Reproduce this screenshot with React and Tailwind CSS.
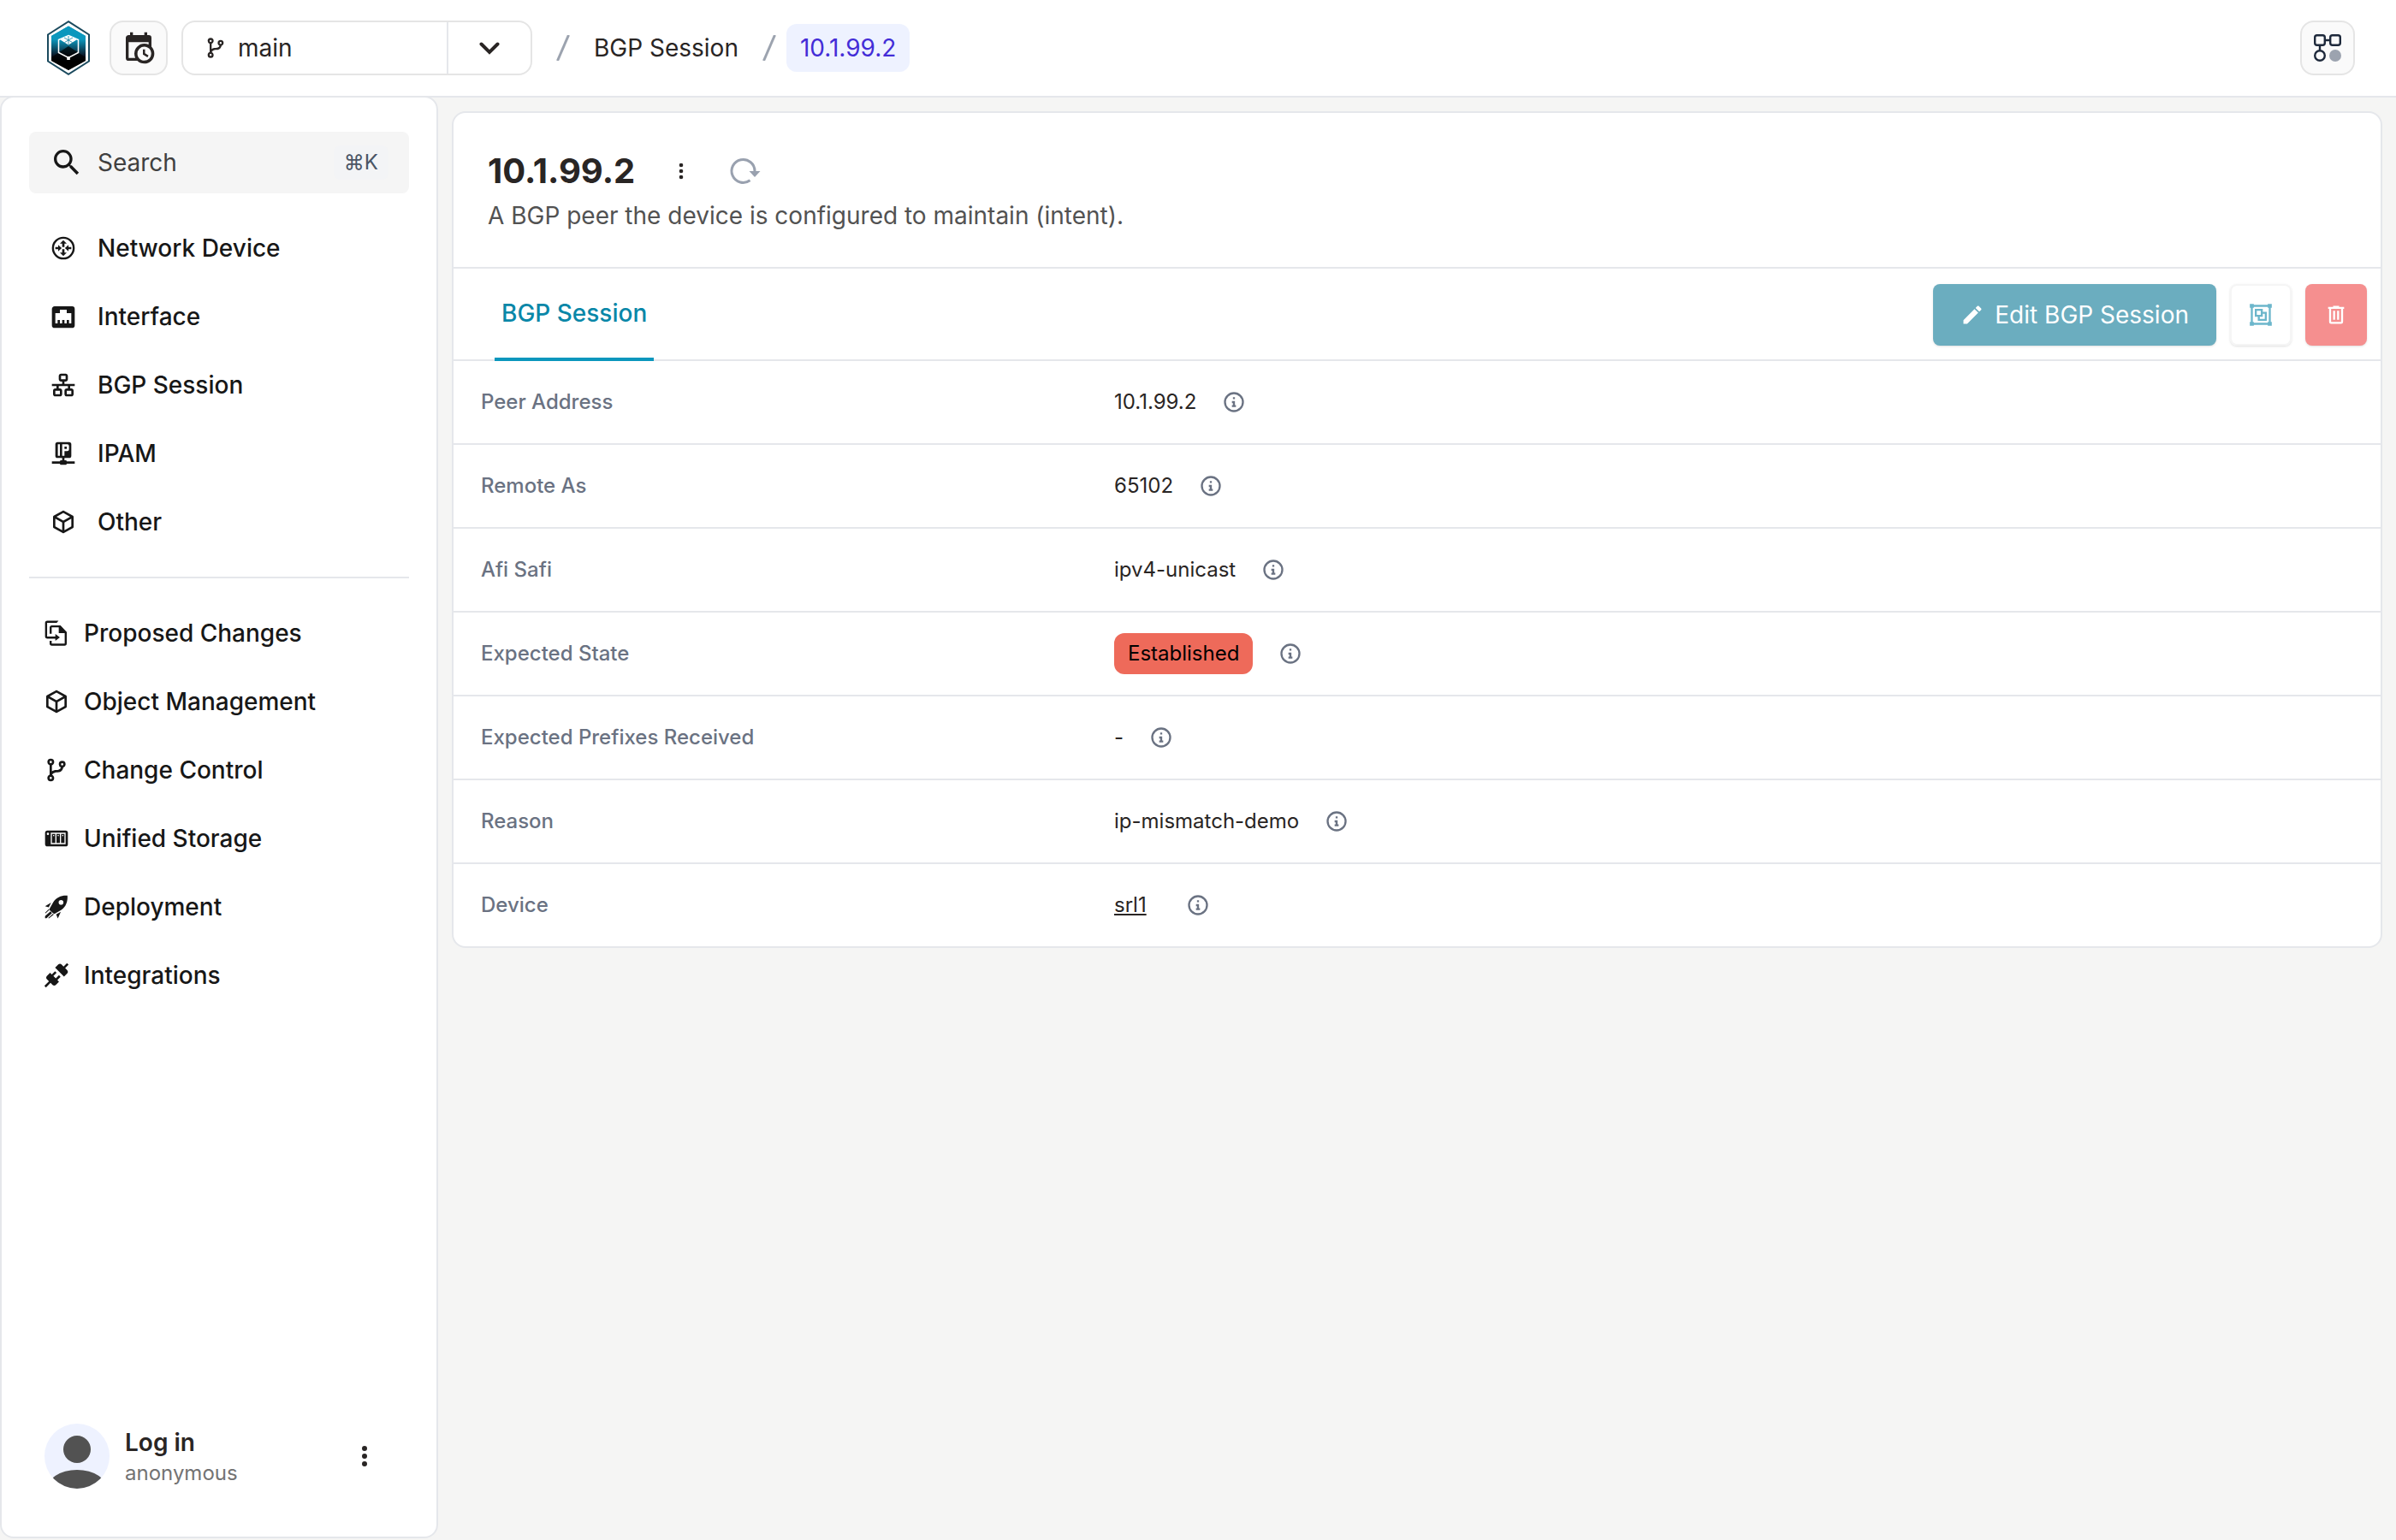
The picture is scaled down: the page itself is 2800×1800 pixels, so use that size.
const icons = {
  calendarClock:
    'M15 13h1.5v2.82l2.44 1.41l-.75 1.3L15 16.69zm4-5H5v11h4.67c-.43-.91-.67-1.93-.67-3a7 7 0 0 1 7-7c1.07 0 2.09.24 3 .67zM5 21a2 2 0 0 1-2-2V5c0-1.11.89-2 2-2h1V1h2v2h8V1h2v2h1a2 2 0 0 1 2 2v6.1c1.24 1.26 2 2.99 2 4.9a7 7 0 0 1-7 7c-1.91 0-3.64-.76-4.9-2zm11-9.85A4.85 4.85 0 0 0 11.15 16c0 2.68 2.17 4.85 4.85 4.85A4.85 4.85 0 0 0 20.85 16c0-2.68-2.17-4.85-4.85-4.85',
  branch:
    'M13 14c-3.36 0-4.46 1.35-4.82 2.24C9.25 16.7 10 17.76 10 19a3 3 0 0 1-3 3a3 3 0 0 1-3-3c0-1.31.83-2.42 2-2.83V7.83A2.99 2.99 0 0 1 4 5a3 3 0 0 1 3-3a3 3 0 0 1 3 3c0 1.31-.83 2.42-2 2.83v5.29c.88-.65 2.16-1.12 4-1.12c2.67 0 3.56-1.34 3.85-2.23A3.006 3.006 0 0 1 14 7a3 3 0 0 1 3-3a3 3 0 0 1 3 3c0 1.34-.88 2.5-2.09 2.86C17.65 11.29 16.68 14 13 14m-6 4a1 1 0 0 0-1 1a1 1 0 0 0 1 1a1 1 0 0 0 1-1a1 1 0 0 0-1-1M7 4a1 1 0 0 0-1 1a1 1 0 0 0 1 1a1 1 0 0 0 1-1a1 1 0 0 0-1-1m10 2a1 1 0 0 0-1 1a1 1 0 0 0 1 1a1 1 0 0 0 1-1a1 1 0 0 0-1-1',
  search:
    'M9.5 3A6.5 6.5 0 0 1 16 9.5c0 1.61-.59 3.09-1.56 4.23l.27.27h.79l5 5l-1.5 1.5l-5-5v-.79l-.27-.27A6.52 6.52 0 0 1 9.5 16A6.5 6.5 0 0 1 3 9.5A6.5 6.5 0 0 1 9.5 3m0 2C7 5 5 7 5 9.5S7 14 9.5 14S14 12 14 9.5S12 5 9.5 5',
  router:
    'M12 2a10 10 0 1 0 0 20a10 10 0 0 0 0-20m0 1.8a8.2 8.2 0 1 1 0 16.4a8.2 8.2 0 0 1 0-16.4M12 5l3 3h-2v3h-2V8H9zm0 14l-3-3h2v-3h2v3h2zM5 11h2.5V9.2L10.6 12l-3.1 2.8V13H5zm14 2h-2.5v1.8L13.4 12l3.1-2.8V11H19z',
  ethernet:
    'M7 15h2v3h2v-3h2v3h2v-3h2v3h2V9h-4V6H9v3H5v9h2zM4.38 3h15.25A2.37 2.37 0 0 1 22 5.38v14.25A2.37 2.37 0 0 1 19.63 22H4.37A2.37 2.37 0 0 1 2 19.63V5.38C2 4.06 3.06 3 4.38 3',
  lan: 'M10 2c-1.11 0-2 .89-2 2v3c0 1.11.89 2 2 2h1v2H2v2h4v2H5c-1.11 0-2 .89-2 2v3c0 1.11.89 2 2 2h4c1.11 0 2-.89 2-2v-3c0-1.11-.89-2-2-2H8v-2h8v2h-1c-1.11 0-2 .89-2 2v3c0 1.11.89 2 2 2h4c1.11 0 2-.89 2-2v-3c0-1.11-.89-2-2-2h-1v-2h4v-2h-9V9h1c1.11 0 2-.89 2-2V4c0-1.11-.89-2-2-2zm0 2h4v3h-4zM5 17h4v3H5zm10 0h4v3h-4z',
  ipNetwork:
    'M17 2a2 2 0 0 1 2 2v10a2 2 0 0 1-2 2h-4v2h1a1 1 0 0 1 1 1h7v2h-7a1 1 0 0 1-1 1h-4a1 1 0 0 1-1-1H2v-2h7a1 1 0 0 1 1-1h1v-2H7a2 2 0 0 1-2-2V4a2 2 0 0 1 2-2zM7.2 4v10h1.8V4zM11 4v10h2v-4h2.5a1.5 1.5 0 0 0 1.5-1.5v-3A1.5 1.5 0 0 0 15.5 4zm2 2h2v2h-2z',
  cube: 'M21 16.5c0 .38-.21.71-.53.88l-7.9 4.44c-.16.12-.36.18-.57.18s-.41-.06-.57-.18l-7.9-4.44A.99.99 0 0 1 3 16.5v-9c0-.38.21-.71.53-.88l7.9-4.44c.16-.12.36-.18.57-.18s.41.06.57.18l7.9 4.44c.32.17.53.5.53.88zM12 4.15L6.04 7.5L12 10.85l5.96-3.35zM5 15.91l6 3.38v-6.71L5 9.21zm14 0v-6.7l-6 3.37v6.71z',
  fileReplace:
    'M13.8 1.2L12.2 3H3.8v12H11v-2.2l4 3l-4 3v-2H4a2 2 0 0 1-2-2V3.2a2 2 0 0 1 2-2zM8 5.2h7.5L21 11v10a2 2 0 0 1-2 2H8a2 2 0 0 1-2-2v-2.2h1.8v2.4h11.4V12H14V7H7.8v5.5H6V7.2a2 2 0 0 1 2-2z',
  nas: 'M4 5c-1.11 0-2 .89-2 2v10c0 1.11.89 2 2 2h16a2 2 0 0 0 2-2V7a2 2 0 0 0-2-2zm.5 2a1 1 0 0 1 1 1a1 1 0 0 1-1 1a1 1 0 0 1-1-1a1 1 0 0 1 1-1M7 7h13v10H7zm1 1v8h3V8zm4 0v8h3V8zm4 0v8h3V8zM9 9h1v1H9zm4 0h1v1h-1zm4 0h1v1h-1z',
  rocket:
    'M21.6 2.1c-5.2-.4-9.6 1.5-12.3 5.5L6.1 13.3c-.3.7-.2 1.3.3 1.8l2.5 2.4c.6.5 1.2.6 1.9.3l5.5-3.1c4-2.8 5.7-7.4 5.3-12.6M16 6a2.1 2.1 0 1 1 0 4.2a2.1 2.1 0 0 1 0-4.2M7.3 8.2L2 11.4l3.2.9zM11.7 18.6l1.5 3.6l2.6-5.9zM5.3 13.8L2 17.2l.5.5l3.4-3.2zM6.7 15.9L2 20.1v1.9h1.3l4.8-4.6zM8.7 18.1l-3.9 3.6l.5.5L9.8 18.5z',
  connection:
    'M21.4 7.5c.8.8.8 2.1 0 2.8l-2.8 2.8l-7.8-7.8l2.8-2.8c.8-.8 2.1-.8 2.8 0l1.8 1.8l3-3l1.4 1.4l-3 3zm-5.8 5.8l-1.4-1.4l-2.8 2.8l-2.1-2.1l2.8-2.8l-1.4-1.4l-2.8 2.8l-1.5-1.4l-2.8 2.8c-.8.8-.8 2.1 0 2.8l1.8 1.8l-4 4l1.4 1.4l4-4l1.8 1.8c.8.8 2.1.8 2.8 0l2.8-2.8l-1.4-1.4z',
  dots: 'M12 16a2 2 0 1 1 0 4a2 2 0 0 1 0-4m0-6a2 2 0 1 1 0 4a2 2 0 0 1 0-4m0-6a2 2 0 1 1 0 4a2 2 0 0 1 0-4',
  pencil:
    'M20.71 7.04c.39-.39.39-1.04 0-1.41l-2.34-2.34c-.37-.39-1.02-.39-1.41 0l-1.84 1.83l3.75 3.75M3 17.25V21h3.75L17.81 9.93l-3.75-3.75z',
  group:
    'M1 1v4h1v14H1v4h4v-1h14v1h4v-4h-1V5h1V1h-4v1H5V1m0 3h14v1h1v14h-1v1H5v-1H4V5h1m1 1v8h3v4h9V9h-4V6m-6 2h4v4H8m6-1h2v5h-5v-2h3',
  trash: 'M9 3v1H4v2h1v13a2 2 0 0 0 2 2h10a2 2 0 0 0 2-2V6h1V4h-5V3zM7 6h10v13H7zm2 2v9h2V8zm4 0v9h2V8z',
  info: 'M12 2a10 10 0 1 0 0 20a10 10 0 0 0 0-20m0 2a8 8 0 1 1 0 16a8 8 0 0 1 0-16m-1 3v2h2V7zm-1 4v2h1v2h-1v2h4v-2h-1v-4z',
};

const objectMenu = [
  { label: 'Network Device', icon: 'router' },
  { label: 'Interface', icon: 'ethernet' },
  { label: 'BGP Session', icon: 'lan' },
  { label: 'IPAM', icon: 'ipNetwork' },
  { label: 'Other', icon: 'cube' },
];

const internalMenu = [
  { label: 'Proposed Changes', icon: 'fileReplace' },
  { label: 'Object Management', icon: 'cube' },
  { label: 'Change Control', icon: 'branch' },
  { label: 'Unified Storage', icon: 'nas' },
  { label: 'Deployment', icon: 'rocket' },
  { label: 'Integrations', icon: 'connection' },
];

const attributes = [
  { label: 'Peer Address', value: '10.1.99.2' },
  { label: 'Remote As', value: '65102' },
  { label: 'Afi Safi', value: 'ipv4-unicast' },
  { label: 'Expected State', value: 'Established', type: 'badge' },
  { label: 'Expected Prefixes Received', value: '-' },
  { label: 'Reason', value: 'ip-mismatch-demo' },
  { label: 'Device', value: 'srl1', type: 'link' },
];

function Icon({ name, className }) {
  return (
    <svg viewBox="0 0 24 24" fill="currentColor" fillRule="evenodd" className={className} aria-hidden="true">
      <path d={icons[name]} />
    </svg>
  );
}

function Logo() {
  return (
    <svg viewBox="0 0 50 64" className="w-[50px] h-16" aria-hidden="true">
      <defs>
        <linearGradient id="logo-fill" x1="0" y1="0" x2="0" y2="1">
          <stop offset="0.3" stopColor="#0b97bd" />
          <stop offset="0.42" stopColor="#0b6f8e" />
          <stop offset="0.66" stopColor="#0a1a2b" />
          <stop offset="0.8" stopColor="#000" />
        </linearGradient>
      </defs>
      <path d="M25 1.2L49 16.5v31L25 62.8L1 47.5v-31z" fill="#fff" stroke="#1b4a5e" strokeWidth="2" />
      <path d="M25 6.5L45 18v29L25 58L5 47V18z" fill="url(#logo-fill)" />
      <path d="M25 6.5L45 18v5L25 13L5 23V18z" fill="#0b97bd" />
      <path d="M25 30L45 43v4L25 58L5 47v-4z" fill="#000" opacity="0.7" />
      <path d="M25 17.5L36.5 22.5v15L25 43.5L13.5 37.5v-15z" fill="none" stroke="#fff" strokeWidth="1.5" />
      <path d="M25 17.5L34.500 22.500L25 28.500L15.500 22.500z" fill="#fff" />
      <path d="M20 20l9.500 5.500M30 20l-9.500 5.500M25 18v10" stroke="#0b7ea0" strokeWidth="0.8" />
      <path d="M23.2 42h3.6v4h-3.6z" fill="#fff" />
    </svg>
  );
}

function Header() {
  return (
    <header className="flex items-center h-[114px] pl-[55px] pr-12 bg-white border-b-2 border-gray-200">
      <a href="#home" aria-label="Home">
        <Logo />
      </a>
      <button
        aria-label="Select date"
        className="ml-[23px] flex items-center justify-center w-[68px] h-16 rounded-2xl border-2 border-neutral-200 bg-neutral-50"
      >
        <Icon name="calendarClock" className="size-10" />
      </button>
      <div className="ml-4 flex w-[410px] h-16 rounded-2xl border-2 border-neutral-200">
        <button className="flex flex-1 items-center gap-3 pl-6 text-left">
          <Icon name="branch" className="size-7" />
          main
        </button>
        <button aria-label="Branches" className="flex items-center justify-center w-[98px] border-l-2 border-gray-200">
          <svg viewBox="0 0 24 24" className="size-6" fill="none" stroke="currentColor" strokeWidth="4" aria-hidden="true">
            <path d="M2.5 7.5L12 17l9.5-9.5" strokeLinecap="round" />
          </svg>
        </button>
      </div>
      <nav aria-label="Breadcrumb" className="ml-7 flex items-center">
        <Slash />
        <a href="#sessions" className="ml-7 mr-7">
          BGP Session
        </a>
        <Slash />
        <a href="#session" className="ml-3 flex items-center h-14 px-4 rounded-xl bg-indigo-50 text-indigo-700">
          10.1.99.2
        </a>
      </nav>
      <button
        aria-label="Schema"
        className="ml-auto flex items-center justify-center size-16 rounded-2xl border-2 border-neutral-200 bg-neutral-50"
      >
        <svg viewBox="0 0 32 32" className="size-8" fill="none" stroke="#1e293b" strokeWidth="2.4" aria-hidden="true">
          <rect x="1.2" y="1.2" width="11.6" height="11.6" rx="2.5" />
          <rect x="19.2" y="1.2" width="11.6" height="11.6" rx="2.5" />
          <circle cx="7" cy="25" r="5.8" />
          <path d="M13 7h6M7 13v6" />
          <circle cx="25" cy="25" r="7" fill="#9ca3af" stroke="none" />
        </svg>
      </button>
    </header>
  );
}

function Slash() {
  return (
    <svg viewBox="0 0 16 30" className="w-4 h-[30px]" stroke="#9ca3af" strokeWidth="3" aria-hidden="true">
      <path d="M1.5 30L14.5 0" />
    </svg>
  );
}

function Sidebar() {
  return (
    <aside className="flex flex-col shrink-0 w-128 -mt-0.5 mb-0.5 px-8 pt-10 pb-14 bg-white border-2 border-gray-200 rounded-2xl">
      <button className="flex items-center gap-4 h-18 px-6 rounded-lg bg-neutral-100 text-neutral-700">
        <Icon name="search" className="size-10 text-neutral-900" />
        Search
        <kbd className="ml-auto px-3 font-[inherit] text-[24px] leading-10 rounded-lg bg-gray-100 text-gray-600">⌘K</kbd>
      </button>

      <nav aria-label="Objects" className="mt-6">
        {objectMenu.map((item) => (
          <a
            key={item.label}
            href={'#' + item.icon}
            className="flex items-center gap-6 h-20 px-6 font-medium text-neutral-900"
          >
            <Icon name={item.icon} className="size-8" />
            {item.label}
          </a>
        ))}
      </nav>

      <hr className="my-6 border-t-2 border-gray-200" />

      <nav aria-label="Administration">
        {internalMenu.map((item) => (
          <a
            key={item.label}
            href={'#' + item.icon}
            className="flex items-center gap-4 h-20 px-4 font-medium text-neutral-900"
          >
            <Icon name={item.icon} className="size-8" />
            {item.label}
          </a>
        ))}
      </nav>

      {/* Account */}
      <div className="mt-auto flex items-center gap-[18px] px-[18px]">
        <svg viewBox="0 0 76 76" className="size-[76px] rounded-full bg-indigo-50" fill="#525252" aria-hidden="true">
          <circle cx="38" cy="30" r="16" />
          <ellipse cx="38" cy="78" rx="36" ry="24" />
        </svg>
        <div className="pt-1">
          <a href="#login" className="block font-semibold leading-9">
            Log in
          </a>
          <p className="text-[24px] leading-9 text-neutral-500">anonymous</p>
        </div>
        <button aria-label="Account menu" className="ml-auto px-4">
          <Icon name="dots" className="size-9" />
        </button>
      </div>
    </aside>
  );
}

function AttributeValue({ value, type }) {
  if (type === 'badge') {
    return <span className="px-4 leading-12 rounded-xl bg-[#ee6a5a] text-black">{value}</span>;
  }
  if (type === 'link') {
    return (
      <a href="#device" className="mr-4 underline">
        {value}
      </a>
    );
  }
  return <span>{value}</span>;
}

export default function App() {
  return (
    <div className="flex flex-col min-h-screen bg-stone-100 font-['Inter',sans-serif] text-[28px] leading-10 text-stone-800">
      <Header />
      <div className="flex flex-1">
        <Sidebar />

        <main className="flex-1 p-4">
          <section className="bg-white border-2 border-gray-200 rounded-2xl">
            {/* Title */}
            <div className="px-10 pt-11 pb-10 border-b-2 border-gray-200">
              <div className="flex items-center h-12">
                <h1 className="text-[40px] leading-12 font-bold">10.1.99.2</h1>
                <button aria-label="More actions" className="ml-10">
                  <Icon name="dots" className="size-7" />
                </button>
                <button aria-label="Refresh" className="ml-10">
                  <svg viewBox="0 0 40 40" className="size-10 text-gray-400" aria-hidden="true">
                    <path d="M26.5 30.8A13.5 13.5 0 1 1 32 20" fill="none" stroke="currentColor" strokeWidth="3" />
                    <path d="M25.5 20h13l-6.5 7z" fill="currentColor" />
                  </svg>
                </button>
              </div>
              <p className="mt-2 text-neutral-600">A BGP peer the device is configured to maintain (intent).</p>
            </div>

            {/* Tabs and actions */}
            <div className="flex items-end justify-between h-27 pl-12 pr-4 border-b-2 border-gray-200">
              <div role="tablist" className="self-stretch -mb-0.5">
                <button
                  role="tab"
                  aria-selected="true"
                  className="h-full px-2 border-b-4 border-[#0b97bd] font-medium text-[#0987a8]"
                >
                  BGP Session
                </button>
              </div>
              <div className="flex gap-4 pb-4">
                <button className="flex items-center gap-3 h-18 px-8 rounded-lg bg-[#6badbf] text-white shadow-sm">
                  <Icon name="pencil" className="size-7" />
                  Edit BGP Session
                </button>
                <button
                  aria-label="Manage groups"
                  className="flex items-center justify-center size-18 rounded-lg border-2 border-neutral-100 text-[#6cb6cb] shadow-sm"
                >
                  <Icon name="group" className="size-7" />
                </button>
                <button
                  aria-label="Delete"
                  className="flex items-center justify-center size-18 rounded-lg bg-[#f58f8f] text-white shadow-sm"
                >
                  <Icon name="trash" className="size-7" />
                </button>
              </div>
            </div>

            <dl className="divide-y-2 divide-gray-200 text-[24px]">
              {attributes.map((attribute) => (
                <div key={attribute.label} className="grid grid-cols-3 gap-8 items-center h-[98px] px-8 last:h-24">
                  <dt className="font-medium text-gray-500">{attribute.label}</dt>
                  <dd className="col-span-2 flex items-center gap-[30px]">
                    <AttributeValue value={attribute.value} type={attribute.type} />
                    <button aria-label={'About ' + attribute.label} className="text-gray-500">
                      <Icon name="info" className="size-7" />
                    </button>
                  </dd>
                </div>
              ))}
            </dl>
          </section>
        </main>
      </div>
    </div>
  );
}
